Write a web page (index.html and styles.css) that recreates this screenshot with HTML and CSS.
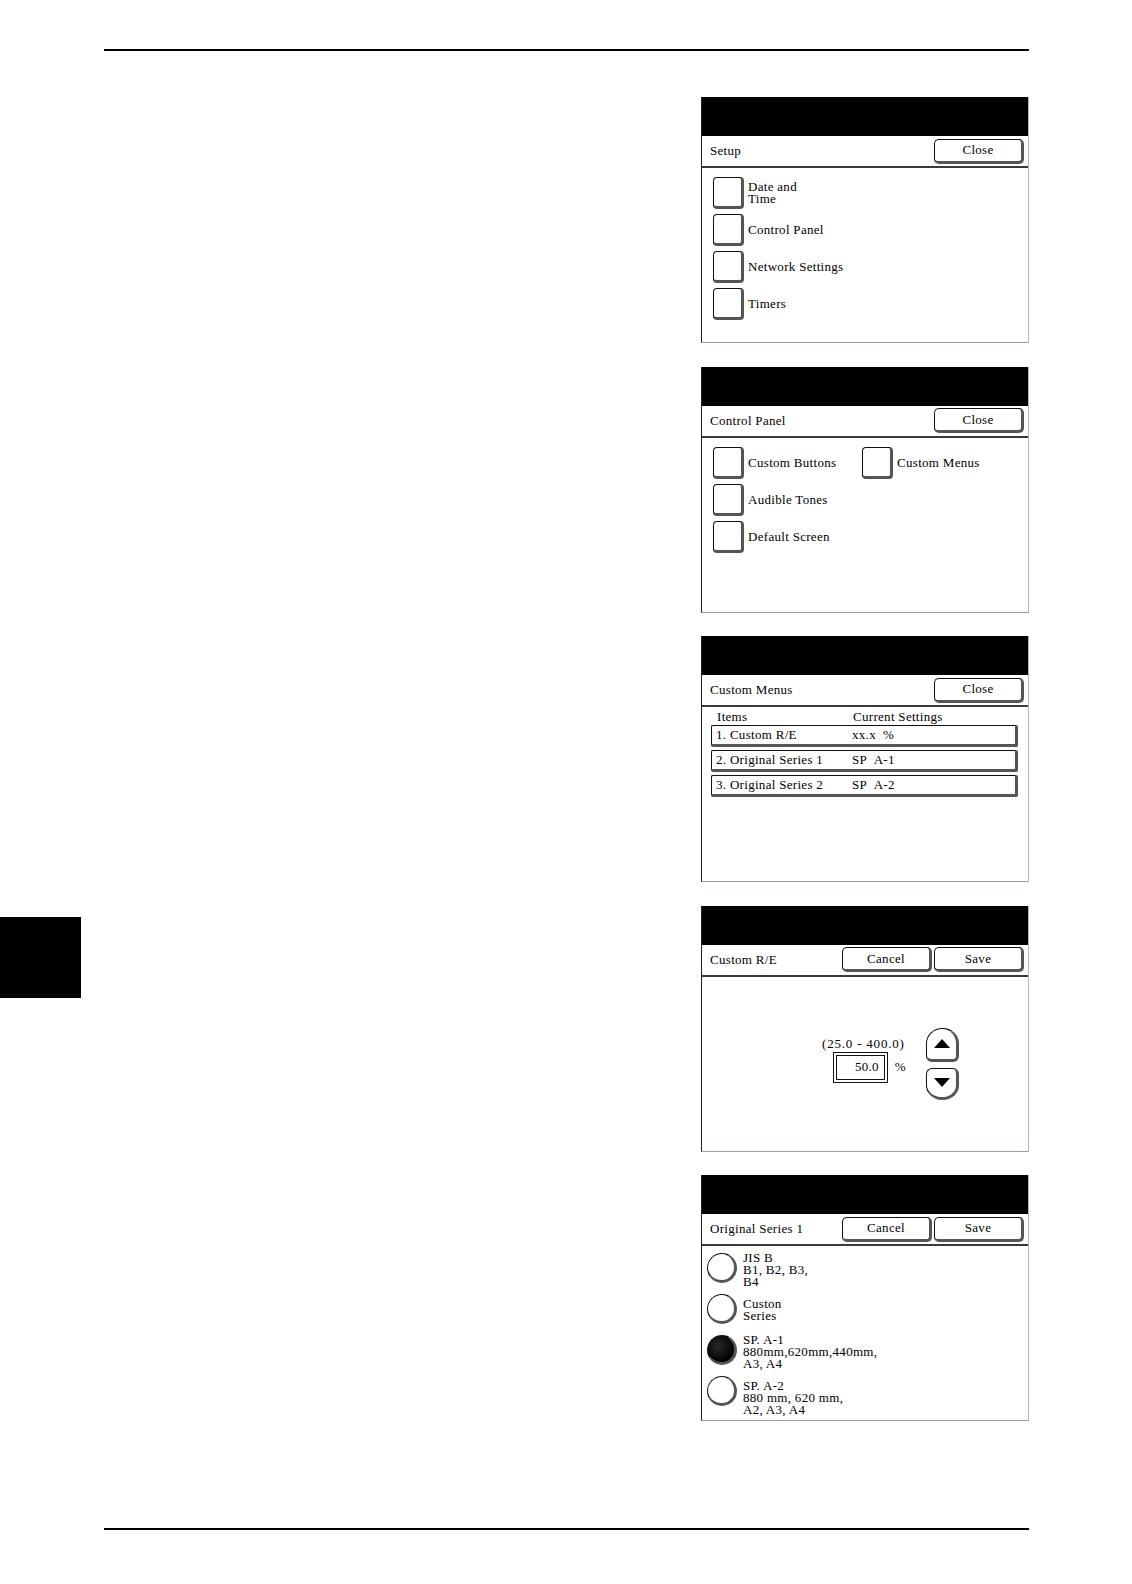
FILE: index.html
```html
<!DOCTYPE html>
<html>
<head>
<meta charset="utf-8">
<title>Setup screens</title>
<link rel="stylesheet" href="styles.css">
</head>
<body>
<div class="page">
  <div class="rule"></div>
  <div class="content">
    <div class="side"><div class="tab"></div></div>
    <div class="panels">

      <div class="panel">
        <div class="panel-top"></div>
        <div class="panel-bar"><span class="title">Setup</span><span class="btn">Close</span></div>
        <div class="panel-body list">
          <div class="check"><span class="box"></span><span class="lbl">Date and<br>Time</span></div>
          <div class="check"><span class="box"></span><span class="lbl">Control Panel</span></div>
          <div class="check"><span class="box"></span><span class="lbl">Network Settings</span></div>
          <div class="check"><span class="box"></span><span class="lbl">Timers</span></div>
        </div>
      </div>

      <div class="panel">
        <div class="panel-top"></div>
        <div class="panel-bar"><span class="title">Control Panel</span><span class="btn">Close</span></div>
        <div class="panel-body grid2">
          <div class="check"><span class="box"></span><span class="lbl">Custom Buttons</span></div>
          <div class="check"><span class="box"></span><span class="lbl">Custom Menus</span></div>
          <div class="check"><span class="box"></span><span class="lbl">Audible Tones</span></div>
          <div></div>
          <div class="check"><span class="box"></span><span class="lbl">Default Screen</span></div>
        </div>
      </div>

      <div class="panel">
        <div class="panel-top"></div>
        <div class="panel-bar"><span class="title">Custom Menus</span><span class="btn">Close</span></div>
        <div class="panel-body menus">
          <div class="cols head"><span>Items</span><span>Current Settings</span></div>
          <div class="cols row"><span>1. Custom R/E</span><span>xx.x &nbsp;%</span></div>
          <div class="cols row"><span>2. Original Series 1</span><span>SP &nbsp;A-1</span></div>
          <div class="cols row"><span>3. Original Series 2</span><span>SP &nbsp;A-2</span></div>
        </div>
      </div>

      <div class="panel">
        <div class="panel-top"></div>
        <div class="panel-bar"><span class="title">Custom R/E</span><span class="btn">Cancel</span><span class="btn">Save</span></div>
        <div class="panel-body ratio">
          <div class="ratio-left">
            <div class="range">(25.0 - 400.0)</div>
            <div class="input-row"><span class="input">50.0</span><span class="pct">%</span></div>
          </div>
          <div class="arrows">
            <span class="arrow up"><svg width="16" height="9" viewBox="0 0 16 9"><polygon points="8,0 16,9 0,9" fill="#000"/></svg></span>
            <span class="arrow down"><svg width="16" height="9" viewBox="0 0 16 9"><polygon points="0,0 16,0 8,9" fill="#000"/></svg></span>
          </div>
        </div>
      </div>

      <div class="panel">
        <div class="panel-top"></div>
        <div class="panel-bar"><span class="title">Original Series 1</span><span class="btn">Cancel</span><span class="btn">Save</span></div>
        <div class="panel-body radios">
          <div class="radio"><span class="circle"></span><span class="lbl">JIS B<br>B1, B2, B3,<br>B4</span></div>
          <div class="radio"><span class="circle"></span><span class="lbl lower">Custon<br>Series</span></div>
          <div class="radio"><span class="circle on"></span><span class="lbl">SP. A-1<br>880mm,620mm,440mm,<br>A3, A4</span></div>
          <div class="radio"><span class="circle"></span><span class="lbl lower">SP. A-2<br>880 mm, 620 mm,<br>A2, A3, A4</span></div>
        </div>
      </div>

    </div>
  </div>
  <div class="rule bottom"></div>
</div>
</body>
</html>
```

FILE: styles.css
```css
html, body {
  margin: 0;
  padding: 0;
  background: #fff;
}

.page {
  width: 1132px;
  padding-top: 49px;
  font-family: "Liberation Serif", "DejaVu Serif", serif;
}

.rule {
  height: 2px;
  width: 925px;
  margin-left: 104px;
  background: #000;
}

.rule.bottom {
  margin-top: 107px;
}

.content {
  display: flex;
  margin-top: 46px;
}

.side {
  width: 81px;
  flex: none;
}

.tab {
  width: 81px;
  height: 81px;
  margin-top: 820px;
  background: #000;
}

.panels {
  margin-left: 620px;
  display: flex;
  flex-direction: column;
  gap: 23.5px;
}

.panel {
  width: 328px;
  height: 246px;
  box-sizing: border-box;
  border-left: 1px solid #222;
  border-right: 1px solid #b4b4c4;
  border-bottom: 1px solid #9c9cb4;
  background: #fff;
  display: flex;
  flex-direction: column;
  overflow: hidden;
  font-size: 13px;
  letter-spacing: 0.3px;
  color: #000;
  line-height: 12px;
}

.panel-top {
  height: 39px;
  flex: none;
  background: #000;
}

.panel-bar {
  height: 30px;
  flex: none;
  display: flex;
  align-items: center;
  gap: 2px;
  padding: 0 4px 0 8px;
  border-bottom: 2px solid #3a3a3a;
}

.title {
  flex: 1;
}

.btn {
  width: 90px;
  height: 25px;
  box-sizing: border-box;
  border: 1px solid #111;
  border-right: 3px solid #555;
  border-bottom: 3px solid #555;
  border-radius: 5px;
  display: flex;
  align-items: center;
  justify-content: center;
  background: #fff;
}

.panel-body {
  flex: 1;
  overflow: hidden;
}

/* checkbox lists */
.list {
  display: flex;
  flex-direction: column;
  gap: 5px;
  padding: 9px 0 0 11px;
}

.grid2 {
  display: grid;
  grid-template-columns: 149px auto;
  row-gap: 5px;
  align-content: start;
  padding: 9px 0 0 11px;
}

.check {
  display: flex;
  align-items: center;
  gap: 4px;
}

.box {
  width: 31px;
  height: 32px;
  box-sizing: border-box;
  border: 1px solid #111;
  border-right: 3px solid #555;
  border-bottom: 3px solid #555;
  border-radius: 4px;
  flex: none;
}

/* custom menus */
.menus {
  display: flex;
  flex-direction: column;
  gap: 3px;
  padding: 4px 0 0 9px;
}

.cols {
  display: grid;
  grid-template-columns: 136px 1fr;
}

.head {
  padding-left: 6px;
  height: 12px;
  margin-bottom: -1px;
}

.row {
  width: 307px;
  height: 22px;
  box-sizing: border-box;
  padding-left: 4px;
  align-items: center;
  border: 1px solid #111;
  border-right: 3px solid #555;
  border-bottom: 3px solid #555;
  border-radius: 2px;
}

/* ratio */
.ratio {
  display: flex;
  align-items: flex-start;
}

.ratio-left {
  margin: 61px 0 0 120px;
  width: 84px;
  white-space: nowrap;
}

.range {
  letter-spacing: 0.8px;
}

.input-row {
  display: flex;
  align-items: center;
  margin-top: 2px;
  padding-left: 11px;
}

.input {
  width: 62px;
  height: 31px;
  box-sizing: border-box;
  border: 4px double #111;
  display: flex;
  align-items: center;
  justify-content: flex-end;
  padding-right: 5px;
}

.pct {
  margin-left: 7px;
}

.arrows {
  margin: 51px 0 0 20px;
  display: flex;
  flex-direction: column;
  gap: 6px;
}

.arrow {
  width: 33px;
  height: 34px;
  box-sizing: border-box;
  border: 1px solid #111;
  border-right: 3px solid #555;
  border-bottom: 3px solid #555;
  display: flex;
  align-items: center;
  justify-content: center;
}

.arrow.up {
  border-radius: 50% 50% 6px 6px / 45% 45% 6px 6px;
}

.arrow.down {
  height: 32px;
  border-radius: 6px 6px 50% 50% / 6px 6px 45% 45%;
}

/* radios */
.radios {
  display: flex;
  flex-direction: column;
  padding: 6px 0 0 5px;
}

.radio {
  height: 41px;
  display: flex;
  align-items: flex-start;
  gap: 6px;
  flex: none;
}

.circle {
  width: 30px;
  height: 30px;
  box-sizing: border-box;
  border: 1px solid #111;
  border-right: 3px solid #555;
  border-bottom: 3px solid #555;
  border-radius: 50%;
  flex: none;
  margin-top: 1px;
}

.circle.on {
  background: radial-gradient(circle at 40% 40%, #2a2a2a, #000 70%);
}

.lower {
  padding-top: 5px;
}
```
